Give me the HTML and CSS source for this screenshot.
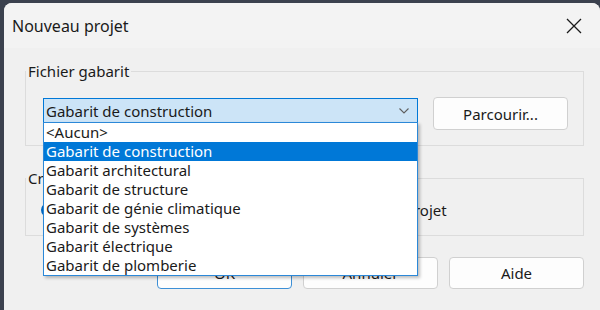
FILE: index.html
```html
<!DOCTYPE html>
<html lang="fr">
<head>
    <meta charset="UTF-8">
    <title>Nouveau projet</title>
    <link rel="stylesheet" href="styles.css">
</head>
<body>
    <div class="dialog">
        <div class="titlebar">
            <span class="title">Nouveau projet</span>
            <svg class="close" width="16" height="16" viewBox="0 0 16 16">
                <path d="M1 1 L15 15 M15 1 L1 15" stroke="#1a1a1a" stroke-width="1.3" fill="none"/>
            </svg>
        </div>

        <div class="content">
            <fieldset class="group">
                <legend>Fichier gabarit</legend>
                <div class="template-row">
                    <div class="combo-wrap">
                        <div class="combo">
                            <span>Gabarit de construction</span>
                            <svg class="chevron" width="10" height="6" viewBox="0 0 10 6">
                                <path d="M0.5 0.5 L5 5 L9.5 0.5" stroke="#606060" stroke-width="1.1" fill="none"/>
                            </svg>
                        </div>
                        <ul class="dropdown">
                            <li>&lt;Aucun&gt;</li>
                            <li class="selected">Gabarit de construction</li>
                            <li>Gabarit architectural</li>
                            <li>Gabarit de structure</li>
                            <li>Gabarit de génie climatique</li>
                            <li>Gabarit de systèmes</li>
                            <li>Gabarit électrique</li>
                            <li>Gabarit de plomberie</li>
                        </ul>
                    </div>
                    <button class="btn browse">Parcourir...</button>
                </div>
            </fieldset>

            <fieldset class="group group-create">
                <legend>Créer nouveau</legend>
                <div class="radio-row">
                    <label class="radio"><span class="dot checked"></span>Projet</label>
                    <label class="radio"><span class="dot"></span>Gabarit de projet</label>
                </div>
            </fieldset>

            <div class="buttons">
                <button class="btn default">OK</button>
                <button class="btn">Annuler</button>
                <button class="btn">Aide</button>
            </div>
        </div>
    </div>
</body>
</html>
```

FILE: styles.css
```css
body {
    margin: 0;
    background-color: #3b414e;
    font-family: "Noto Sans", "Open Sans", sans-serif;
    color: #1a1a1a;
    overflow: hidden;
}

.dialog {
    margin: 3px 0 0 4px;
    width: 596px;
    height: 320px;
    background-color: #f0f0f0;
    border-radius: 8px;
    overflow: hidden;
}

.titlebar {
    height: 45px;
    background-color: #f3f3f3;
    display: flex;
    align-items: center;
    justify-content: space-between;
    padding: 0 18px 0 8px;
}

.title {
    font-size: 16px;
}

.close {
    margin-top: 1px;
}

.content {
    padding: 0 16px 0 21px;
}

.group {
    margin: 15px 0 0 0;
    padding: 18px 15px 15px 0;
    border: 1px solid #dcdcdc;
    min-width: 0;
}

.group legend {
    font-size: 15px;
    line-height: 16px;
    padding: 0 2px;
    margin-left: 0;
}

.template-row {
    display: flex;
    align-items: flex-start;
    gap: 15px;
    margin-left: 17px;
}

.combo-wrap {
    position: relative;
    width: 375px;
}

.combo {
    margin-top: 1px;
    height: 23px;
    border: 1px solid #0078d7;
    background-color: #cce4f7;
    display: flex;
    align-items: center;
    justify-content: space-between;
    padding: 0 8px 0 2px;
    font-size: 15px;
}

.chevron {
    margin-top: 1px;
}

.dropdown {
    position: absolute;
    top: 25px;
    left: 0;
    width: 373px;
    margin: 0;
    padding: 0;
    list-style: none;
    background-color: #fff;
    border: 1px solid #2b88d8;
    box-shadow: 2px 2px 3px rgba(0, 0, 0, 0.25);
    z-index: 2;
}

.dropdown li {
    height: 19px;
    line-height: 19px;
    padding-left: 2px;
    font-size: 15px;
}

.dropdown li.selected {
    background-color: #0078d7;
    color: #fff;
}

.btn {
    font-family: inherit;
    font-size: 15px;
    color: #1a1a1a;
    background-color: #fdfdfd;
    border: 1px solid #d0d0d0;
    border-radius: 4px;
    height: 33px;
    width: 135px;
    padding: 0;
}

.group-create {
    margin-top: 24px;
    padding: 14px 15px 15px 0;
}

.radio-row {
    display: flex;
    align-items: center;
    height: 20px;
    gap: 200px;
    margin-left: 15px;
}

.radio {
    display: flex;
    align-items: center;
    gap: 8px;
    font-size: 15px;
}

.dot {
    width: 14px;
    height: 14px;
    border-radius: 50%;
    border: 1px solid #5a5a5a;
    background-color: #fff;
    box-sizing: border-box;
}

.dot.checked {
    border: 4px solid #0067c0;
}

.buttons {
    display: flex;
    justify-content: flex-end;
    gap: 11px;
    margin-top: 21px;
}

.buttons .btn {
    height: 32px;
}

.btn.default {
    border-color: #3c8fd6;
}
```
